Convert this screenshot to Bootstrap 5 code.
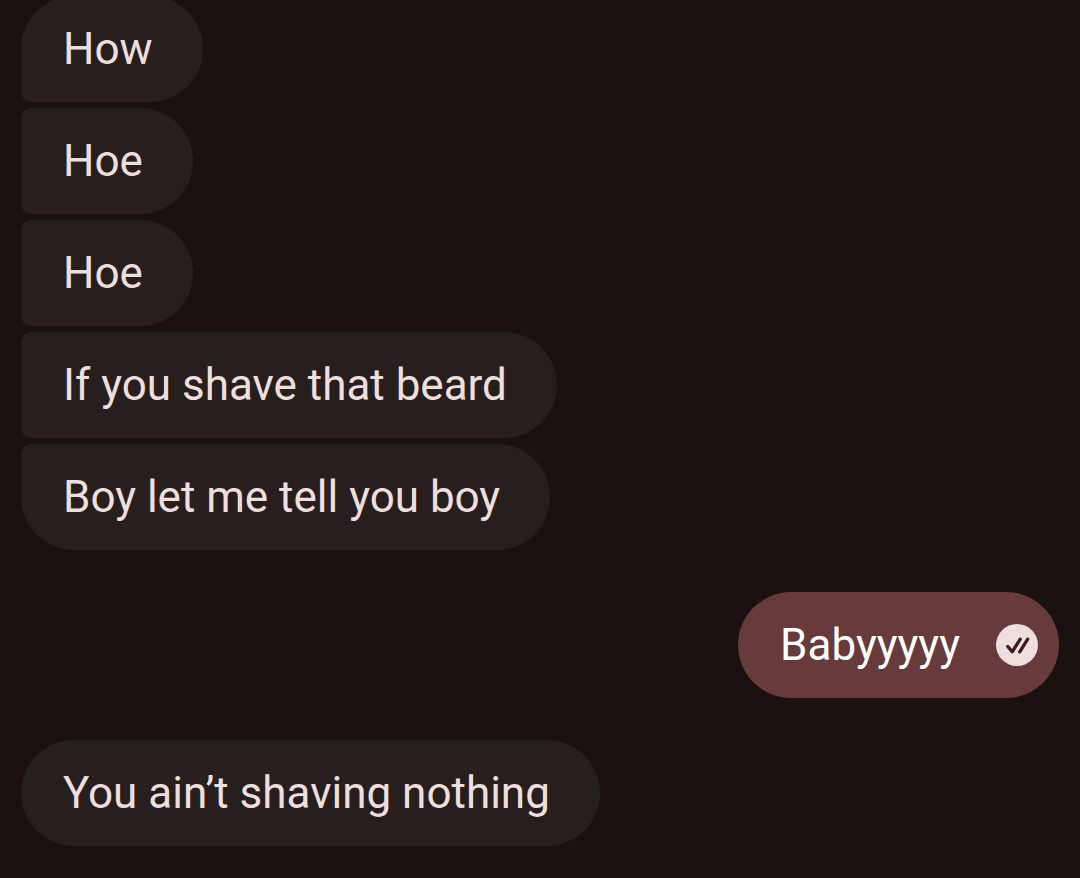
<!DOCTYPE html>
<html lang="en" data-bs-theme="dark">
<head>
<meta charset="utf-8">
<meta name="viewport" content="width=device-width, initial-scale=1">
<title>Conversation</title>
<link rel="stylesheet" href="https://cdn.jsdelivr.net/npm/bootstrap@5.3.0/dist/css/bootstrap.min.css">
<style>
  body {
    background: #1b1110;
    color: #eedfde;
    font-family: Roboto, sans-serif;
    font-size: 44px;
    line-height: 58px;
  }
  .chat-log { padding: 0 21px 32px; gap: 42px; }
  .msg-group { gap: 6px; }
  .bubble {
    background: #271f1d;
    border-radius: 53px;
    padding: 24px 50px 24px 42px;
    max-width: 80%;
  }
  .received .bubble:not(:last-child) { border-bottom-left-radius: 10px; }
  .received .bubble:not(:first-child) { border-top-left-radius: 10px; }
  .sent .bubble {
    background: #673a3b;
    color: #fff;
    padding-right: 21px;
    gap: 36px;
  }
  .receipt { width: 42px; height: 42px; }
</style>
</head>
<body>
<main class="chat-log d-flex flex-column justify-content-end vh-100 overflow-hidden">
  <section class="msg-group received d-flex flex-column align-items-start">
    <div class="bubble">How</div>
    <div class="bubble">Hoe</div>
    <div class="bubble">Hoe</div>
    <div class="bubble">If you shave that beard</div>
    <div class="bubble">Boy let me tell you boy</div>
  </section>
  <section class="msg-group sent d-flex flex-column align-items-end">
    <div class="bubble d-flex align-items-center">
      <span>Babyyyyy</span>
      <svg class="receipt flex-shrink-0" viewBox="0 0 42 42" role="img" aria-label="Read">
        <circle cx="21" cy="21" r="21" fill="#eedfde"/>
        <path d="M11.800 22.500l4.400 5.300 8-12.600M23.700 27.800l8-12.600" fill="none" stroke="#40191c" stroke-width="3.300" stroke-linecap="round" stroke-linejoin="round"/>
      </svg>
    </div>
  </section>
  <section class="msg-group received d-flex flex-column align-items-start">
    <div class="bubble">You ain’t shaving nothing</div>
  </section>
</main>
<script src="https://cdn.jsdelivr.net/npm/bootstrap@5.3.0/dist/js/bootstrap.bundle.min.js"></script>
</body>
</html>
